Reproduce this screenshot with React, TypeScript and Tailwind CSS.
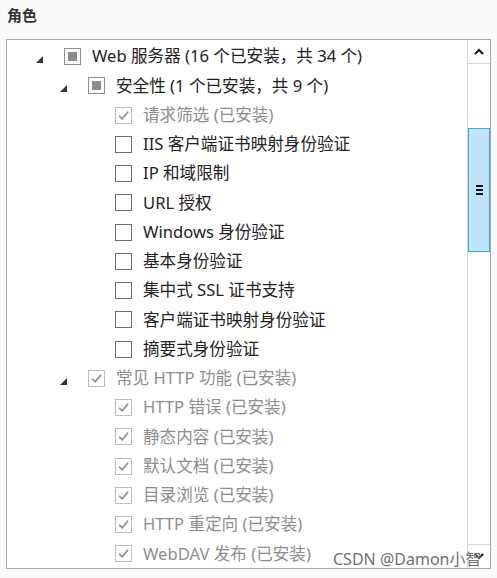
import React from 'react'

type Check = 'off' | 'on' | 'mixed'

type Row = {
  level: 0 | 1 | 2
  label: string
  check: Check
  expanded?: boolean
  disabled?: boolean
}

const rows: Row[] = [
  { level: 0, label: 'Web 服务器 (16 个已安装，共 34 个)', check: 'mixed', expanded: true },
  { level: 1, label: '安全性 (1 个已安装，共 9 个)', check: 'mixed', expanded: true },
  { level: 2, label: '请求筛选 (已安装)', check: 'on', disabled: true },
  { level: 2, label: 'IIS 客户端证书映射身份验证', check: 'off' },
  { level: 2, label: 'IP 和域限制', check: 'off' },
  { level: 2, label: 'URL 授权', check: 'off' },
  { level: 2, label: 'Windows 身份验证', check: 'off' },
  { level: 2, label: '基本身份验证', check: 'off' },
  { level: 2, label: '集中式 SSL 证书支持', check: 'off' },
  { level: 2, label: '客户端证书映射身份验证', check: 'off' },
  { level: 2, label: '摘要式身份验证', check: 'off' },
  { level: 1, label: '常见 HTTP 功能 (已安装)', check: 'on', expanded: true, disabled: true },
  { level: 2, label: 'HTTP 错误 (已安装)', check: 'on', disabled: true },
  { level: 2, label: '静态内容 (已安装)', check: 'on', disabled: true },
  { level: 2, label: '默认文档 (已安装)', check: 'on', disabled: true },
  { level: 2, label: '目录浏览 (已安装)', check: 'on', disabled: true },
  { level: 2, label: 'HTTP 重定向 (已安装)', check: 'on', disabled: true },
  { level: 2, label: 'WebDAV 发布 (已安装)', check: 'on', disabled: true },
]

const indent = ['pl-[29px]', 'pl-[53px]', 'pl-[80px]']

function CheckBox({ check, disabled }: { check: Check; disabled?: boolean }) {
  if (check === 'mixed') {
    return (
      <span className="flex h-[17px] w-[17px] shrink-0 items-center justify-center border border-[#8f8f8f] bg-white">
        <span className="h-[9px] w-[9px] bg-[#8c8c8c]" />
      </span>
    )
  }
  return (
    <span
      className={
        'flex h-[17px] w-[17px] shrink-0 items-center justify-center border bg-white ' +
        (disabled ? 'border-[#bdbdbd]' : 'border-[#6f6f6f]')
      }
    >
      {check === 'on' && (
        <svg width="13" height="13" viewBox="0 0 12 12">
          <path d="M2 6.2 L4.8 9 L10.2 2.6" fill="none" stroke="#8a8a8a" strokeWidth="1.5" />
        </svg>
      )}
    </span>
  )
}

function Expander() {
  return (
    <svg width="7" height="7" viewBox="0 0 7 7" className="mt-[6px]">
      <polygon points="7,0 7,7 0,7" fill="#333" />
    </svg>
  )
}

export default function App() {
  return (
    <div
      className="relative h-[578px] w-[497px] overflow-hidden bg-[#fafafa]"
      style={{ fontFamily: '"Noto Sans", "Noto Sans CJK SC", sans-serif' }}
    >
      <div className="px-[7px] pt-[4px] text-[15px] font-bold leading-[22px] text-[#333]">角色</div>

      {/* role tree */}
      <div className="mt-[13px] ml-[6px] flex h-[530px] w-[485px] border border-[#a8a8a8] bg-white">
        <div className="flex-1 overflow-hidden pt-[2px]">
          {rows.map((r, i) => (
            <div key={i} className={'flex h-[29.25px] items-center ' + indent[r.level]}>
              <span className="flex h-full w-[28px] shrink-0 items-center">
                {r.expanded && <Expander />}
              </span>
              <CheckBox check={r.check} disabled={r.disabled} />
              <span
                className={
                  'ml-[11px] whitespace-nowrap text-[16.6px] leading-none ' +
                  (r.disabled ? 'text-[#8d8d8d]' : 'text-[#222]')
                }
              >
                {r.label}
              </span>
            </div>
          ))}
        </div>

        {/* scrollbar */}
        <div className="flex w-[23px] flex-col border-l border-[#d8d8d8] bg-white">
          <div className="flex h-[24px] items-center justify-center border-b border-[#d8d8d8]">
            <svg width="10" height="7" viewBox="0 0 10 7">
              <path d="M1 6 L5 2 L9 6" fill="none" stroke="#111" strokeWidth="2" />
            </svg>
          </div>
          <div className="flex flex-1 flex-col pt-[64px]">
            <div className="flex h-[124px] items-center justify-center border border-[#3aa9d6] bg-[#bfe4fb]">
              <div className="flex flex-col gap-[2px]">
                <span className="h-[2px] w-[7px] bg-[#111]" />
                <span className="h-[2px] w-[7px] bg-[#111]" />
                <span className="h-[2px] w-[7px] bg-[#111]" />
              </div>
            </div>
          </div>
          <div className="flex h-[24px] items-center justify-center border-t border-[#d8d8d8]">
            <svg width="10" height="7" viewBox="0 0 10 7">
              <path d="M1 1 L5 5 L9 1" fill="none" stroke="#111" strokeWidth="2" />
            </svg>
          </div>
        </div>
      </div>

      {/* watermark */}
      <div className="absolute left-[333px] top-[549px] whitespace-nowrap text-[16px] leading-[20px] text-[#707070] [text-shadow:0_0_2px_#fff]">
        CSDN @Damon小智
      </div>
    </div>
  )
}
